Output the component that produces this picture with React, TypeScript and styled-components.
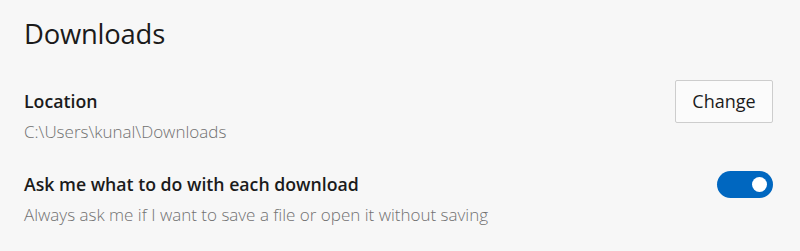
import * as React from 'react';
import styled, { createGlobalStyle } from 'styled-components';

const GlobalStyle = createGlobalStyle`
  html, body {
    margin: 0;
    padding: 0;
    background: #f7f7f7;
  }
  body {
    font-family: 'Open Sans', 'Noto Sans', sans-serif;
    color: #1b1b1b;
  }
`;

export default function App() {
  const [ask, setAsk] = React.useState(true);

  return (
    <Page>
      <GlobalStyle />
      <Title>Downloads</Title>
      <Setting>
        <Label>Location</Label>
        <Control>
          <Button>Change</Button>
        </Control>
        <Description>C:\Users\kunal\Downloads</Description>
      </Setting>
      <Setting>
        <Label>Ask me what to do with each download</Label>
        <Control>
          <Toggle $on={ask} onClick={() => setAsk(!ask)} aria-pressed={ask}>
            <Knob $on={ask} />
          </Toggle>
        </Control>
        <Description>Always ask me if I want to save a file or open it without saving</Description>
      </Setting>
    </Page>
  );
}

const Page = styled.div`
  width: 800px;
  height: 251px;
  box-sizing: border-box;
  padding: 14px 27px 0 24px;
  background: #f7f7f7;
`;

const Title = styled.h1`
  margin: 0 0 34px 0;
  font-size: 27.4px;
  font-weight: 400;
  line-height: 40px;
  letter-spacing: -0.2px;
`;

// label + control on the first line, description underneath
const Setting = styled.div`
  display: grid;
  grid-template-columns: 1fr auto;
  margin-bottom: 27px;
`;

const Label = styled.div`
  grid-column: 1;
  font-size: 17.7px;
  font-weight: 600;
  line-height: 26px;
`;

const Control = styled.div`
  grid-column: 2;
  grid-row: 1;
  display: flex;
  align-items: center;
  height: 26px;
`;

const Description = styled.div`
  grid-column: 1;
  margin-top: 6px;
  font-size: 17px;
  font-weight: 300;
  line-height: 24px;
  color: #717171;
`;

const Button = styled.button`
  width: 98px;
  height: 43px;
  box-sizing: border-box;
  border: 1px solid #cdcdcd;
  border-radius: 2px;
  background: #fbfbfb;
  font-family: inherit;
  font-size: 18px;
  color: #1b1b1b;
  cursor: pointer;
`;

const Toggle = styled.button<{ $on: boolean }>`
  position: relative;
  flex-shrink: 0;
  width: 56px;
  height: 27px;
  padding: 0;
  border: ${(p) => (p.$on ? 'none' : '2px solid #5d5d5d')};
  border-radius: 14px;
  background: ${(p) => (p.$on ? '#0067c0' : 'transparent')};
  cursor: pointer;
`;

const Knob = styled.span<{ $on: boolean }>`
  position: absolute;
  top: 6px;
  left: ${(p) => (p.$on ? '35px' : '6px')};
  width: 15px;
  height: 15px;
  border-radius: 50%;
  background: ${(p) => (p.$on ? '#ffffff' : '#5d5d5d')};
`;
